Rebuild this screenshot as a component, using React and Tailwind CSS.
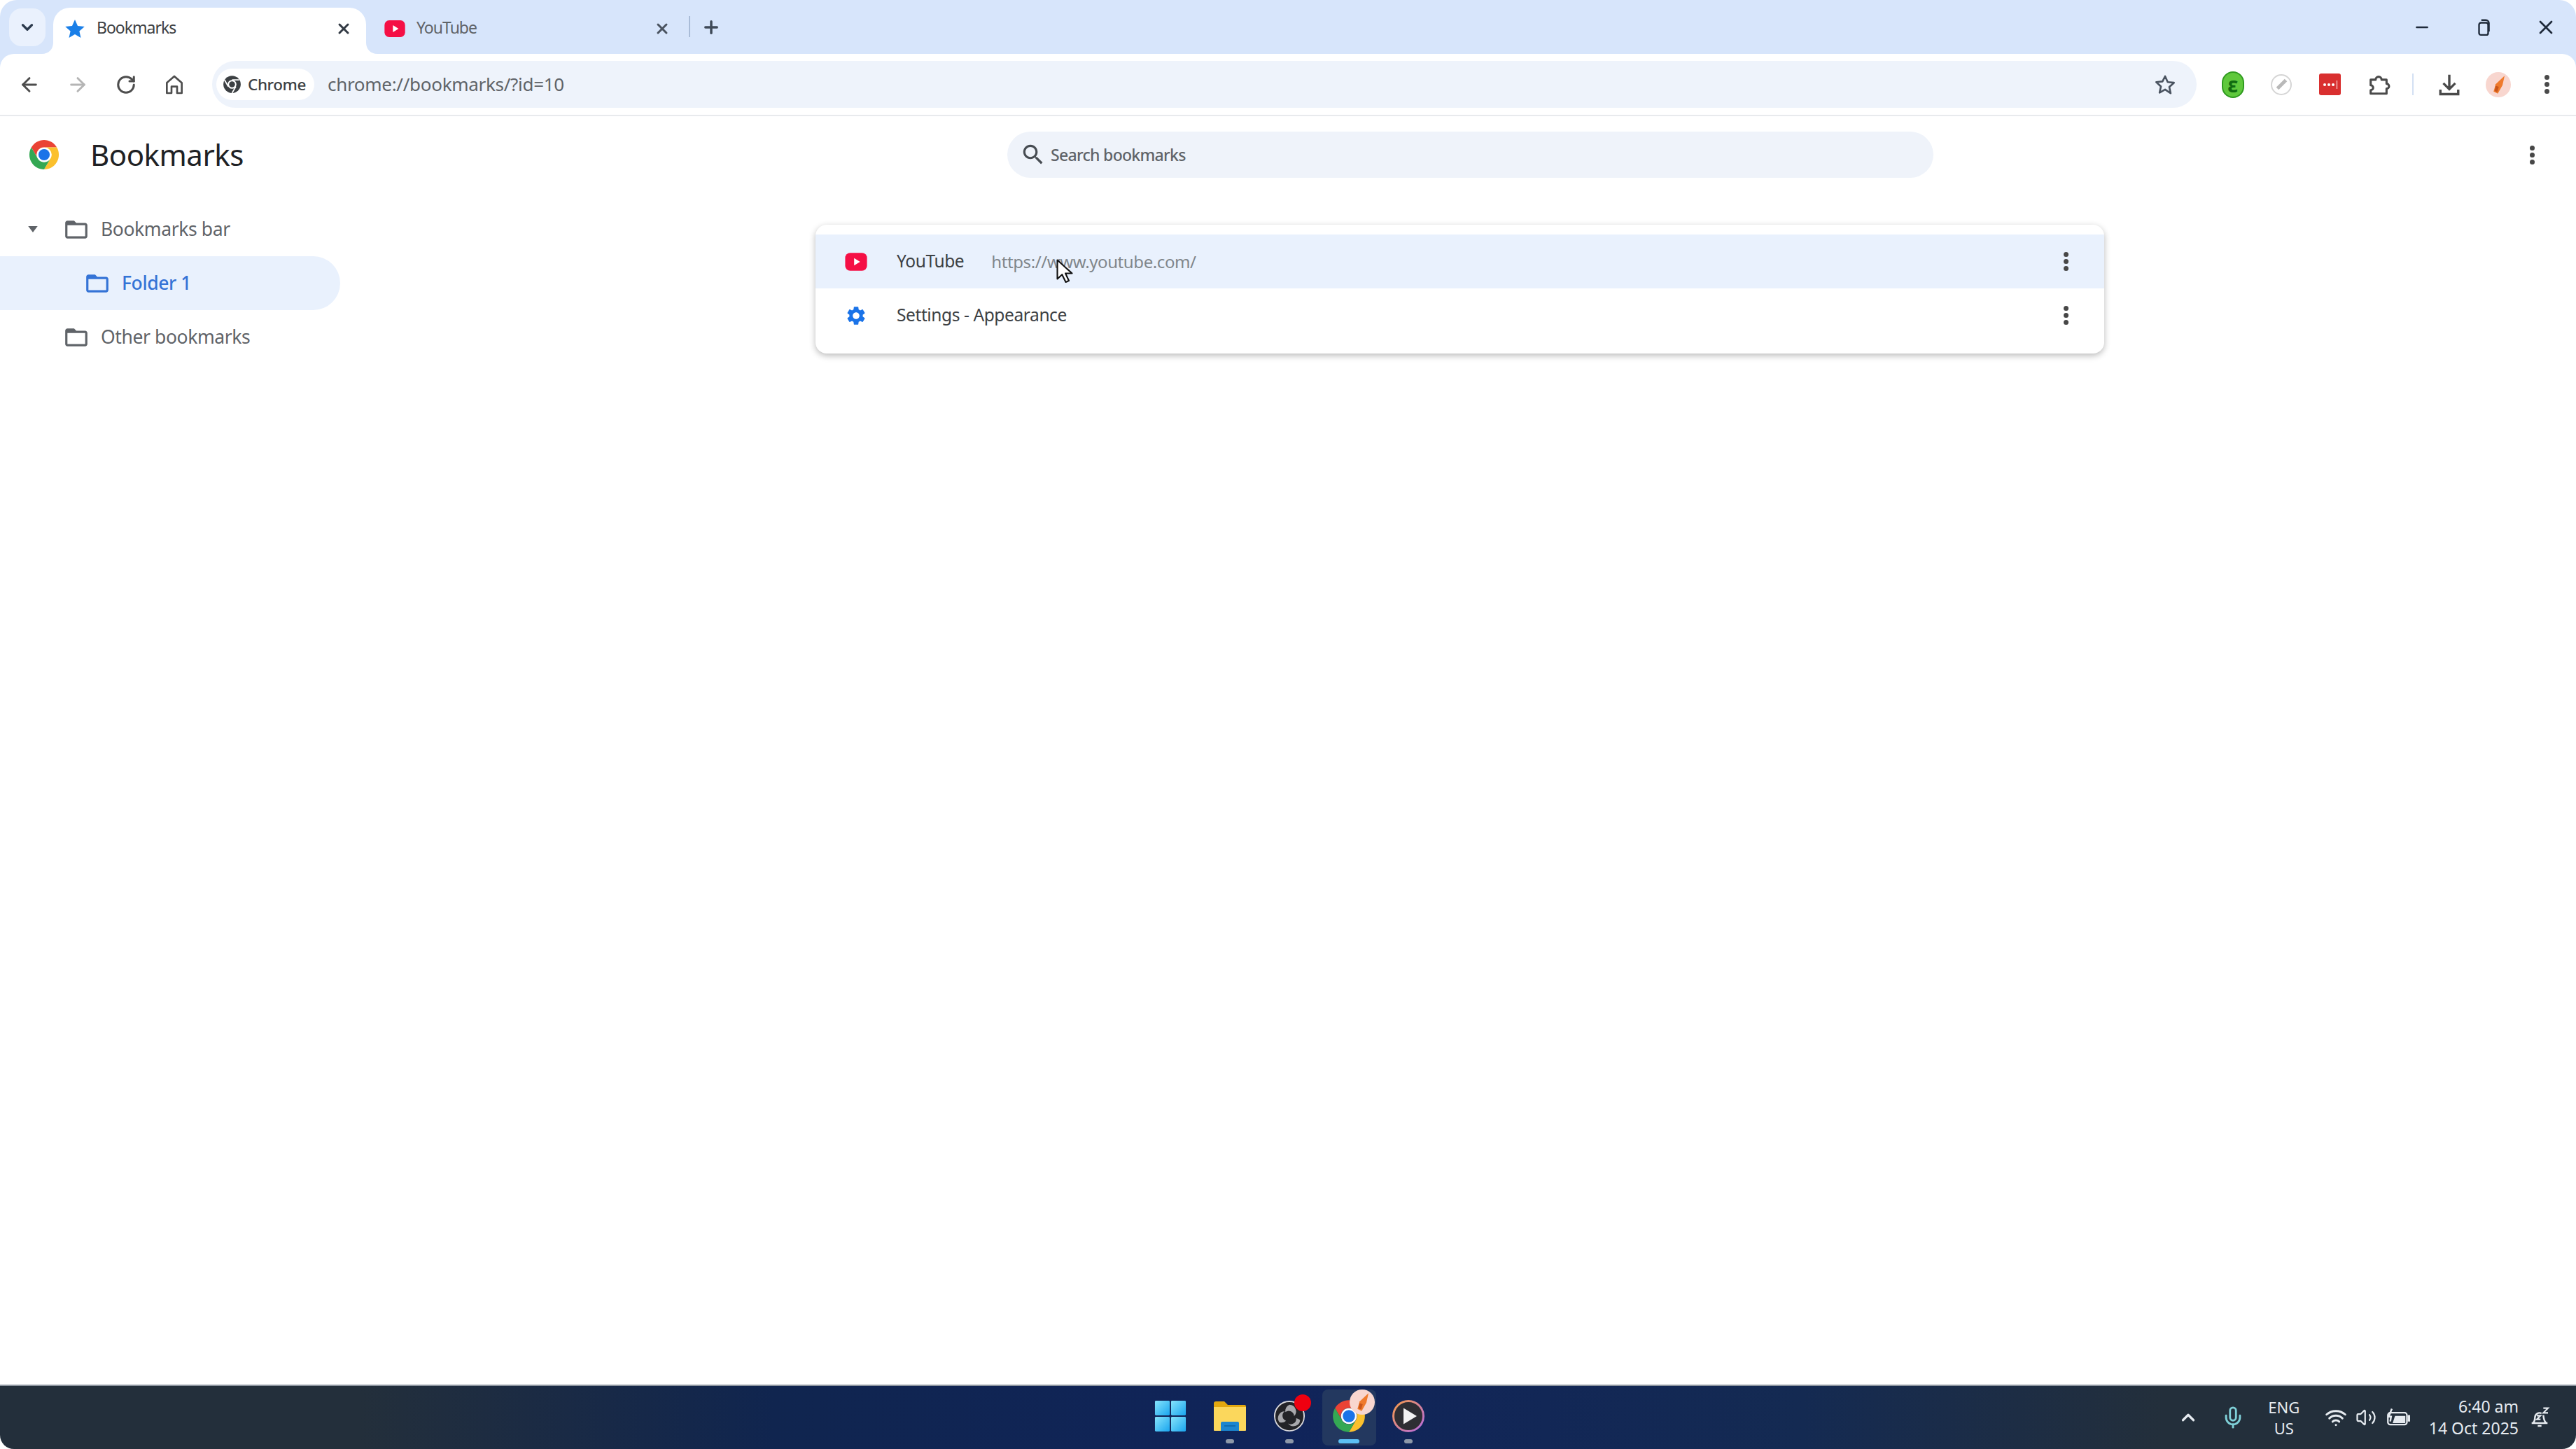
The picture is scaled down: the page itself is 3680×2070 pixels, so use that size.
import { ArrowLeft, ArrowRight, RotateCw, Plus, X, Minus, ChevronDown, ChevronUp, Mic, Wifi, Volume2 } from 'lucide-react'

const FONT = "font-['Noto_Sans','Open_Sans',sans-serif]"
const P_FOLDER = 'M20 6h-8l-2-2H4c-1.1 0-1.99.9-1.99 2L2 18c0 1.1.9 2 2 2h16c1.1 0 2-.9 2-2V8c0-1.1-.9-2-2-2zm0 12H4V8h16v10z'
const P_SEARCH = 'M15.5 14h-.79l-.28-.27C15.41 12.59 16 11.11 16 9.5 16 5.91 13.09 3 9.5 3S3 5.91 3 9.5 5.91 16 9.5 16c1.61 0 3.09-.59 4.23-1.57l.27.28v.79l5 4.99L20.49 19l-4.99-5zm-6 0C7.01 14 5 11.99 5 9.5S7.01 5 9.5 5 14 7.01 14 9.5 11.99 14 9.5 14z'
const P_GEAR = 'M19.14 12.94c.04-.3.06-.61.06-.94 0-.32-.02-.64-.07-.94l2.03-1.58c.18-.14.23-.41.12-.61l-1.92-3.32c-.12-.22-.37-.29-.59-.22l-2.39.96c-.5-.38-1.03-.7-1.62-.94l-.36-2.54c-.04-.24-.24-.41-.48-.41h-3.84c-.24 0-.43.17-.47.41l-.36 2.54c-.59.24-1.13.57-1.62.94l-2.39-.96c-.22-.08-.47 0-.59.22L2.74 8.87c-.12.21-.08.47.12.61l2.03 1.58c-.05.3-.09.63-.09.94s.02.64.07.94l-2.03 1.58c-.18.14-.23.41-.12.61l1.92 3.32c.12.22.37.29.59.22l2.39-.96c.5.38 1.03.7 1.62.94l.36 2.54c.05.24.24.41.48.41h3.84c.24 0 .44-.17.47-.41l.36-2.54c.59-.24 1.13-.56 1.62-.94l2.39.96c.22.08.47 0 .59-.22l1.92-3.32c.12-.22.07-.47-.12-.61l-2.01-1.58zM12 15.6c-1.98 0-3.6-1.62-3.6-3.6s1.62-3.6 3.6-3.6 3.6 1.62 3.6 3.6-1.62 3.6-3.6 3.6z'

function Svg({ d, className, vb = '0 0 24 24' }) {
  return <svg viewBox={vb} className={className} fill="currentColor"><path d={d} /></svg>
}

function Dots({ className = 'text-[#474747]' }) {
  return (
    <div className={`flex flex-col items-center gap-[3px] ${className}`}>
      <span className="w-[7px] h-[7px] rounded-full bg-current" />
      <span className="w-[7px] h-[7px] rounded-full bg-current" />
      <span className="w-[7px] h-[7px] rounded-full bg-current" />
    </div>
  )
}

function ChromeLogo({ className }) {
  return (
    <svg viewBox="0 0 24 24" className={className}>
      <path fill="#ea4335" d="M2.5 6.5A11 11 0 0 1 21.5 6.5H12A5.5 5.5 0 0 0 7.2 14.8Z" />
      <path fill="#fbc02d" d="M21.5 6.5A11 11 0 0 1 12 23L16.8 14.8A5.5 5.5 0 0 0 12 6.5Z" />
      <path fill="#34a853" d="M12 23A11 11 0 0 1 2.5 6.5L7.2 14.8A5.5 5.5 0 0 0 16.8 14.8Z" />
      <circle cx="12" cy="12" r="5.4" fill="#fff" />
      <circle cx="12" cy="12" r="4.2" fill="#1a73e8" />
    </svg>
  )
}

function ChromeMono({ className }) {
  return (
    <svg viewBox="0 0 24 24" className={className}>
      <circle cx="12" cy="12" r="11" fill="#3c4043" />
      <circle cx="12" cy="12" r="5.6" fill="#fff" />
      <circle cx="12" cy="12" r="3.8" fill="#3c4043" />
      <path d="M12 6.4H21M16.8 14.8L12 23M7.2 14.8L2.5 6.5" stroke="#fff" strokeWidth="1.6" fill="none" />
    </svg>
  )
}

function YtIcon({ className }) {
  return (
    <svg viewBox="0 0 24 24" className={className}>
      <rect x="1" y="3" width="22" height="18" rx="5" fill="#f50f45" />
      <path d="M10 8.3v7.4l6-3.7z" fill="#fff" />
    </svg>
  )
}

function Avatar({ className }) {
  return (
    <svg viewBox="0 0 24 24" className={className}>
      <circle cx="12" cy="12" r="12" fill="#f8d6cf" />
      <path d="M18 3.5l-2 9-4.5 8-4-2 2-7z" fill="#ef7a2c" />
      <path d="M9.5 13l3 1-1.5 5-2.5-1z" fill="#c9551a" />
    </svg>
  )
}

function TabTitle({ children, active }) {
  return <span className={`text-[23px] leading-none tracking-[-1px] ${active ? 'text-[#3c4043]' : 'text-[#5f6368]'}`}>{children}</span>
}

function TabStrip() {
  return (
    <div className="flex items-end h-[77px] pl-[13px] pr-[27px]">
      <div className="w-[52px] h-[54px] self-start mt-[12px] rounded-[18px] bg-[#eaf1fd] flex items-center justify-center">
        <ChevronDown size={26} strokeWidth={3} className="text-[#2c3a4d]" />
      </div>
      {/* active tab */}
      <div className="relative ml-[11px] w-[447px] h-[66px] bg-white rounded-t-[24px] flex items-center pl-[16px] pr-[20px] pb-[6px]">
        <svg viewBox="0 0 24 24" className="absolute -left-[16px] bottom-0 w-[16px] h-[16px]"><path d="M24 0v24H0C14 24 24 14 24 0z" fill="#fff" /></svg>
        <svg viewBox="0 0 24 24" className="absolute -right-[16px] bottom-0 w-[16px] h-[16px]"><path d="M0 0v24h24C10 24 0 14 0 0z" fill="#fff" /></svg>
        <svg viewBox="0 0 24 24" className="w-[30px] h-[30px]"><path fill="#1a7fe8" d="M12 1.5l3.2 7.2 7.8.8-5.9 5.2 1.7 7.7L12 18.4l-6.8 4 1.7-7.7L1 9.5l7.8-.8z" /></svg>
        <div className="ml-[16px] flex-1"><TabTitle active>Bookmarks</TabTitle></div>
        <X size={24} strokeWidth={3} className="text-[#333a44]" />
      </div>
      {/* inactive tab */}
      <div className="w-[461px] h-[66px] flex items-center pl-[25px] pb-[6px]">
        <YtIcon className="w-[32px] h-[32px]" />
        <div className="ml-[15px] flex-1"><TabTitle>YouTube</TabTitle></div>
        <X size={24} strokeWidth={3} className="text-[#4a5360] mr-[26px]" />
      </div>
      <div className="w-[2px] h-[30px] bg-[#a9bcd8] mb-[24px]" />
      <Plus size={28} strokeWidth={3} className="text-[#3f4a58] ml-[16px] mb-[24px]" />
      <div className="flex-1 flex justify-end items-center gap-[60px] h-full">
        <Minus size={26} strokeWidth={2.4} className="text-[#1f2a3a] mr-[2px]" />
        <svg viewBox="0 0 24 24" fill="none" stroke="#1f2a3a" strokeWidth="2.2" className="w-[26px] h-[26px]">
          <rect x="6" y="6" width="12" height="16" rx="2.5" />
          <path d="M9 2.5h6a4 4 0 0 1 4 4v11" />
        </svg>
        <X size={32} strokeWidth={2} className="text-[#1f2a3a]" />
      </div>
    </div>
  )
}

function ExtBtn({ children, className = '' }) {
  return <div className={`w-[69.5px] flex items-center justify-center ${className}`}>{children}</div>
}

function Toolbar() {
  return (
    <div className="h-[89px] bg-white rounded-t-[20px] border-b-[2px] border-[#e8eaed] flex items-center">
      <div className="w-[303px] shrink-0 flex items-center pl-[8px]">
        <div className="w-[68px] flex justify-center"><ArrowLeft size={32} strokeWidth={2.2} className="text-[#4d4d4d]" /></div>
        <div className="w-[69px] flex justify-center"><ArrowRight size={32} strokeWidth={2.2} className="text-[#b5b5b5]" /></div>
        <div className="w-[69px] flex justify-center"><RotateCw size={30} strokeWidth={2.4} className="text-[#4d4d4d]" /></div>
        <div className="w-[70px] flex justify-center">
          <svg viewBox="0 0 24 24" fill="none" stroke="#4d4d4d" strokeWidth="2" className="w-[32px] h-[32px]">
            <path d="M4 21V10l8-7 8 7v11h-5v-7H9v7z" strokeLinejoin="round" />
          </svg>
        </div>
      </div>
      <div className="w-[2835px] h-[67px] rounded-full bg-[#eef3fb] flex items-center pl-[6px]">
        <div className="h-[45px] w-[140px] rounded-full bg-white flex items-center pl-[9px]">
          <ChromeMono className="w-[27px] h-[27px]" />
          <span className="ml-[9px] text-[#3c4043] text-[22.5px] tracking-[-0.4px] font-medium">Chrome</span>
        </div>
        <span className="ml-[19px] flex-1 text-[26px] text-[#5f6368] tracking-[-0.3px]">chrome://bookmarks/?id=10</span>
        <svg viewBox="0 0 24 24" fill="none" stroke="#4a5360" strokeWidth="2" className="w-[32px] h-[32px] mr-[29px]">
          <path strokeLinejoin="round" d="M12 3l2.8 6.2 6.7.7-5 4.6 1.4 6.7L12 17.1l-5.9 3.4 1.4-6.7-5-4.6 6.7-.7z" />
        </svg>
      </div>
      <div className="flex-1 flex items-center pl-[17px]">
        <ExtBtn>
          <div className="w-[32px] h-[38px] rounded-full bg-[#5fc83c] border-[2px] border-[#2f9a1f] flex items-center justify-center text-[#116b10] text-[30px] leading-none font-bold">ε</div>
        </ExtBtn>
        <ExtBtn>
          <div className="w-[30px] h-[30px] rounded-full border-[2px] border-[#d5d5d5] flex items-center justify-center">
            <div className="w-[5px] h-[17px] bg-[#b9b9b9] rotate-45" />
          </div>
        </ExtBtn>
        <ExtBtn>
          <div className="w-[31px] h-[31px] rounded-[3px] bg-[#d92f2f] flex items-center justify-center gap-[2px]">
            <span className="w-[4px] h-[4px] rounded-full bg-white" />
            <span className="w-[4px] h-[4px] rounded-full bg-white" />
            <span className="w-[4px] h-[4px] rounded-full bg-white" />
            <span className="w-[1px] h-[12px] bg-white ml-[1px]" />
          </div>
        </ExtBtn>
        <ExtBtn>
          <svg viewBox="0 0 24 24" fill="none" stroke="#4a4a4a" strokeWidth="2.2" className="w-[34px] h-[34px]">
            <path strokeLinejoin="round" d="M4 7h5a3 3 0 0 1 6 0h5v4a2.5 2.5 0 0 1 0 5v5H4v-3.5a2.5 2.5 0 0 0 0-5z" />
          </svg>
        </ExtBtn>
        <div className="w-[2px] h-[31px] bg-[#d3e0f3] ml-[13px] mr-[16px]" />
        <div className="w-[70px] flex justify-center">
          <svg viewBox="0 0 24 24" fill="none" stroke="#4a4a4a" strokeWidth="2.4" className="w-[34px] h-[34px]">
            <path d="M12 2v14M6 10.5l6 6 6-6M3 17v4.5h18V17" />
          </svg>
        </div>
        <ExtBtn><Avatar className="w-[36px] h-[36px]" /></ExtBtn>
        <ExtBtn><Dots className="text-[#4a4a4a]" /></ExtBtn>
      </div>
    </div>
  )
}

function TreeRow({ label, indent, selected, caret }) {
  const tone = selected ? 'text-[#3473d6]' : 'text-[#5f6368]'
  return (
    <div className={`h-[77px] w-[486px] rounded-r-full flex items-center ${selected ? 'bg-[#e9f1fd]' : ''} ${indent}`}>
      <div className="w-[54px] flex justify-center">
        {caret && <svg viewBox="0 0 12 8" className="w-[14px] h-[9px]"><path d="M0 0h12L6 8z" fill="#5f6368" /></svg>}
      </div>
      <Svg d={P_FOLDER} className={`ml-[16px] w-[38px] h-[38px] ${tone}`} />
      <span className={`ml-[16px] text-[26.5px] tracking-[-0.4px] ${tone} ${selected ? 'font-medium' : ''}`}>{label}</span>
    </div>
  )
}

function BookmarkRow({ icon, title, url, hovered }) {
  return (
    <div className={`h-[77px] flex items-center pl-[40px] pr-[51px] ${hovered ? 'bg-[#e9f1fd]' : ''}`}>
      <div className="w-[36px] flex justify-center">{icon}</div>
      <span className="ml-[40px] text-[#3c4043] text-[24.5px] tracking-[-0.4px]">{title}</span>
      {url && <span className="ml-[39px] text-[#80868b] text-[24px] tracking-[-0.4px]">{url}</span>}
      <div className="flex-1" />
      <Dots className="text-[#474747]" />
    </div>
  )
}

function Page() {
  return (
    <div className="flex-1 bg-white flex flex-col min-h-0">
      <div className="h-[110px] flex items-center shrink-0">
        <div className="w-[1439px] shrink-0 flex items-center pl-[40px]">
          <ChromeLogo className="w-[46px] h-[46px]" />
          <span className="ml-[43px] text-[#202124] text-[42px] leading-none tracking-[-0.5px]">Bookmarks</span>
        </div>
        <div className="w-[1323px] h-[66px] rounded-full bg-[#eff3fa] flex items-center pl-[18px]">
          <Svg d={P_SEARCH} className="w-[38px] h-[38px] text-[#474c52]" />
          <span className="ml-[6px] text-[#5f6368] text-[23px] tracking-[-0.7px] font-medium">Search bookmarks</span>
        </div>
        <div className="flex-1 flex justify-end pr-[59px]"><Dots className="text-[#474747]" /></div>
      </div>
      <div className="flex flex-1 min-h-0">
        <div className="w-[486px] shrink-0 pt-[13px]">
          <TreeRow label="Bookmarks bar" caret indent="pl-[20px]" />
          <TreeRow label="Folder 1" selected indent="pl-[50px]" />
          <TreeRow label="Other bookmarks" indent="pl-[20px]" />
        </div>
        <div className="flex-1 pt-[45px] pl-[679px]">
          <div className="relative w-[1841px] pt-[14px] pb-[16px] bg-white rounded-[16px] shadow-[0_3px_10px_rgba(0,0,0,0.28)] overflow-visible">
            <BookmarkRow hovered icon={<YtIcon className="w-[34px] h-[34px]" />} title="YouTube" url="https://www.youtube.com/" />
            <BookmarkRow icon={<Svg d={P_GEAR} className="w-[32px] h-[32px] text-[#1a73e8]" />} title="Settings - Appearance" />
            {/* mouse pointer */}
            <svg viewBox="0 0 16 24" className="absolute left-[344px] top-[49px] w-[24px] h-[36px]">
              <path d="M1 1v18l4.5-4.2L9 22l3-1.3-3.3-7H15z" fill="#fff" stroke="#111" strokeWidth="1.4" strokeLinejoin="round" />
            </svg>
          </div>
        </div>
      </div>
    </div>
  )
}

function WinLogo() {
  return (
    <svg viewBox="0 0 48 48" className="w-[46px] h-[46px]">
      <defs>
        <linearGradient id="win" x1="0" y1="0" x2="1" y2="1">
          <stop offset="0" stopColor="#86e4fb" />
          <stop offset="1" stopColor="#19a5ee" />
        </linearGradient>
      </defs>
      <rect x="1" y="1" width="22" height="22" rx="1.5" fill="url(#win)" />
      <rect x="25" y="1" width="22" height="22" rx="1.5" fill="url(#win)" />
      <rect x="1" y="25" width="22" height="22" rx="1.5" fill="url(#win)" />
      <rect x="25" y="25" width="22" height="22" rx="1.5" fill="url(#win)" />
    </svg>
  )
}

function FolderLogo() {
  return (
    <svg viewBox="0 0 48 44" className="w-[48px] h-[44px]">
      <path d="M1 4a3 3 0 0 1 3-3h12l5 5h24a2 2 0 0 1 2 2v4H1z" fill="#e3a80f" />
      <path d="M1 9h46v33a1 1 0 0 1-1 1H2a1 1 0 0 1-1-1z" fill="#fbd75c" />
      <path d="M11 32a2 2 0 0 1 2-2h22a2 2 0 0 1 2 2v11H11z" fill="#1b86cf" />
      <rect x="16" y="35" width="16" height="2" fill="#0f6cae" />
    </svg>
  )
}

function ObsLogo() {
  return (
    <div className="relative">
      <svg viewBox="0 0 48 48" className="w-[46px] h-[46px]">
        <circle cx="24" cy="24" r="22" fill="#232327" stroke="#d8d8dc" strokeWidth="2" />
        <path d="M24 7a10 10 0 0 1 7 17 8 8 0 0 0-13-6 10 10 0 0 1 6-11z" fill="#a8a8ac" />
        <path d="M40 30a10 10 0 0 1-18 5 8 8 0 0 0 12-8 10 10 0 0 1 6 3z" fill="#a8a8ac" />
        <path d="M9 33a10 10 0 0 1 8-16 8 8 0 0 0 2 14 10 10 0 0 1-10 2z" fill="#a8a8ac" />
      </svg>
      <span className="absolute -right-[8px] -top-[8px] w-[24px] h-[24px] rounded-full bg-[#f00010]" />
    </div>
  )
}

function PlayerLogo() {
  return (
    <svg viewBox="0 0 48 48" className="w-[48px] h-[48px]">
      <defs>
        <linearGradient id="ring" x1="0" y1="0" x2="1" y2="1">
          <stop offset="0" stopColor="#f59a4a" />
          <stop offset="1" stopColor="#b56be0" />
        </linearGradient>
      </defs>
      <circle cx="24" cy="24" r="21.5" fill="#2e2e33" stroke="url(#ring)" strokeWidth="3" />
      <path d="M17 12.5v23L36 24z" fill="#f2f2f2" />
    </svg>
  )
}

function TaskItem({ children, mark, active }) {
  return (
    <div className={`relative w-[77px] h-[80px] mx-[4px] rounded-[8px] flex items-center justify-center pb-[4px] ${active ? 'bg-[#23385f]' : ''}`}>
      {children}
      {mark && <span className={`absolute bottom-[3px] left-1/2 -translate-x-1/2 h-[6px] rounded-full ${active ? 'w-[30px] bg-[#5cc0f5]' : 'w-[12px] bg-[#8d98a8]'}`} />}
    </div>
  )
}

function Taskbar() {
  return (
    <div className="h-[92px] shrink-0 rounded-b-[20px] border-t-[2px] border-[#8d959f] bg-[linear-gradient(90deg,#232f3b_14%,#10254f_30%,#10245a_50%,#142a52_70%,#232f3b_84%)] grid grid-cols-[1fr_auto_1fr] items-center text-[#e6ebf0]">
      <div />
      <div className="flex items-center justify-center pl-[4px]">
        <TaskItem><WinLogo /></TaskItem>
        <TaskItem mark><FolderLogo /></TaskItem>
        <TaskItem mark><ObsLogo /></TaskItem>
        <TaskItem mark active>
          <div className="relative">
            <ChromeLogo className="w-[50px] h-[50px]" />
            <Avatar className="absolute -right-[12px] -top-[13px] w-[36px] h-[36px]" />
          </div>
        </TaskItem>
        <TaskItem mark><PlayerLogo /></TaskItem>
      </div>
      <div className="flex items-center justify-end pr-[36px]">
        <ChevronUp size={30} strokeWidth={2.6} />
        <Mic size={34} strokeWidth={2} className="ml-[32px] text-[#7fd0d8]" />
        <div className="ml-[28px] w-[56px] text-center text-[22px] leading-[30px]">ENG<br />US</div>
        <Wifi size={32} strokeWidth={2.2} className="ml-[30px]" />
        <Volume2 size={30} strokeWidth={1.8} className="ml-[12px]" />
        <svg viewBox="0 0 30 24" fill="none" stroke="#e6ebf0" strokeWidth="2" className="ml-[14px] w-[34px] h-[28px]">
          <rect x="2" y="6" width="24" height="15" rx="3" />
          <path d="M27 10h2v6h-2" fill="#e6ebf0" />
          <path d="M8 19l3-9h13v9z" fill="#e6ebf0" stroke="none" />
          <path d="M7 1L3 11h3l-1 6" strokeWidth="2.2" />
        </svg>
        <div className="ml-[27px] text-right text-[23px] leading-[31px]">6:40 am<br />14 Oct 2025</div>
        <svg viewBox="0 0 24 24" fill="none" stroke="#e6ebf0" strokeWidth="1.8" className="ml-[14px] w-[32px] h-[32px]">
          <path d="M5 18c1.5-1.5 2-3 2-6a5 5 0 0 1 7-4.5M16 9.5c.3 3.5.8 6.5 3 8.5M3.5 18h17M10 21h4" />
          <path d="M16 2h5l-5 5h5M9 10h4l-4 4h4" strokeWidth="1.6" />
        </svg>
      </div>
    </div>
  )
}

export default function App() {
  return (
    <div className={`w-[3680px] h-[2070px] bg-white flex flex-col overflow-hidden ${FONT}`}>
      <div className="bg-[#d7e5fb] rounded-t-[24px] shrink-0">
        <TabStrip />
        <Toolbar />
      </div>
      <Page />
      <Taskbar />
    </div>
  )
}
